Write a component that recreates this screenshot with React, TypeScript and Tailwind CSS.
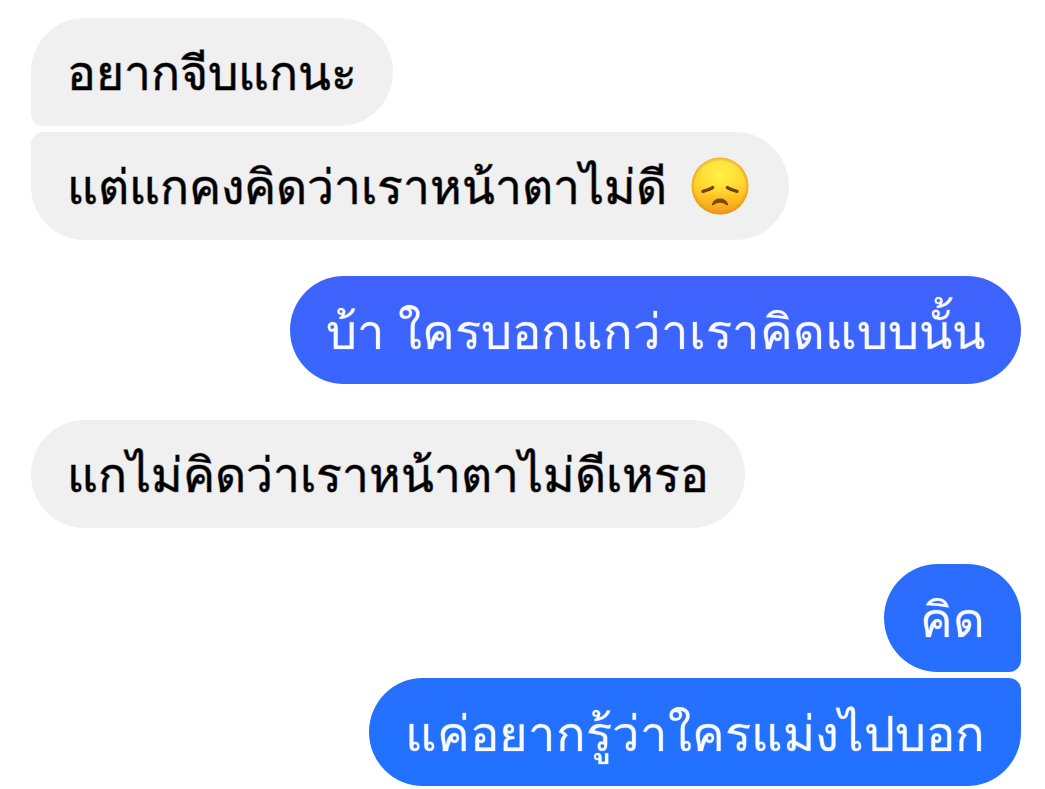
import { cva } from "class-variance-authority";

const bubble = cva(
  "flex w-fit items-center rounded-[54px] px-9 py-[18px] leading-[72px]",
  {
    variants: {
      side: {
        left: "bg-[#f0f0f0] text-[48px] text-black [-webkit-text-stroke:1px_rgb(0_0_0/0.5)]",
        right:
          "text-[49px] text-[#f8faff] [-webkit-text-stroke:1px_rgb(248_250_255/0.2)]",
      },
      tail: {
        none: "",
        leftFirst: "rounded-bl-xl",
        leftLast: "rounded-tl-xl",
        rightFirst: "rounded-br-xl",
        rightLast: "rounded-tr-xl",
      },
    },
    defaultVariants: { tail: "none" },
  }
);

function SadFace() {
  return (
    <svg
      role="img"
      aria-label="disappointed face"
      viewBox="0 0 58 58"
      className="mr-1 ml-6 size-[58px] shrink-0"
    >
      <defs>
        <linearGradient id="skin" x1="0" y1="0" x2="0" y2="1">
          <stop offset="0" stopColor="#fddf45" />
          <stop offset="0.45" stopColor="#ffd62c" />
          <stop offset="0.75" stopColor="#fdbb22" />
          <stop offset="1" stopColor="#f39a1c" />
        </linearGradient>
        <radialGradient id="glow" cx="0.5" cy="0.32" r="0.42">
          <stop offset="0" stopColor="#fff347" stopOpacity="0.9" />
          <stop offset="1" stopColor="#fff347" stopOpacity="0" />
        </radialGradient>
        <radialGradient id="rim" cx="0.5" cy="0.5" r="0.5">
          <stop offset="0.86" stopColor="#e28a18" stopOpacity="0" />
          <stop offset="1" stopColor="#e28a18" stopOpacity="0.6" />
        </radialGradient>
      </defs>
      <circle cx="29" cy="29" r="28.5" fill="url(#skin)" />
      <circle cx="29" cy="29" r="28.5" fill="url(#glow)" />
      <circle cx="29" cy="29" r="28.5" fill="url(#rim)" />
      <g fill="none" stroke="#6d430c" strokeLinecap="round">
        <path d="M12 34.3Q17.5 33.2 21.6 30.6" strokeWidth="3.4" />
        <path d="M46 34.3Q40.5 33.2 36.4 30.6" strokeWidth="3.4" />
      </g>
      <path
        d="M21 46.8C22.4 43.2 25.4 41.4 29 41.4S35.6 43.2 37 46.8C37.5 48.4 36.2 48.9 35.2 48C31.6 45 26.4 45 22.8 48C21.8 48.9 20.5 48.4 21 46.8Z"
        fill="#7a4a0f"
      />
    </svg>
  );
}

export default function App() {
  return (
    <main
      lang="th"
      className="flex min-h-screen flex-col gap-9 bg-white pt-[18px] pr-6 pb-[3px] pl-[31px] font-['Noto_Sans',sans-serif]"
    >
      <div className="flex flex-col items-start gap-1.5">
        <p className={bubble({ side: "left", tail: "leftFirst" })}>
          อยากจีบแกนะ
        </p>
        <p className={bubble({ side: "left", tail: "leftLast" })}>
          แต่แกคงคิดว่าเราหน้าตาไม่ดี
          <SadFace />
        </p>
      </div>

      <div className="flex flex-col items-end">
        <p
          className={`${bubble({ side: "right" })} bg-linear-to-b from-[#3f62fb] to-[#3866ff]`}
        >
          บ้า ใครบอกแกว่าเราคิดแบบนั้น
        </p>
      </div>

      <div className="flex flex-col items-start">
        <p className={bubble({ side: "left" })}>แกไม่คิดว่าเราหน้าตาไม่ดีเหรอ</p>
      </div>

      <div className="flex flex-col items-end gap-1.5">
        <p
          className={`${bubble({ side: "right", tail: "rightFirst" })} bg-linear-to-b from-[#2c6bfb] to-[#266fff]`}
        >
          คิด
        </p>
        <p
          className={`${bubble({ side: "right", tail: "rightLast" })} bg-linear-to-b from-[#266ffe] to-[#1f72ff]`}
        >
          แค่อยากรู้ว่าใครแม่งไปบอก
        </p>
      </div>
    </main>
  );
}
